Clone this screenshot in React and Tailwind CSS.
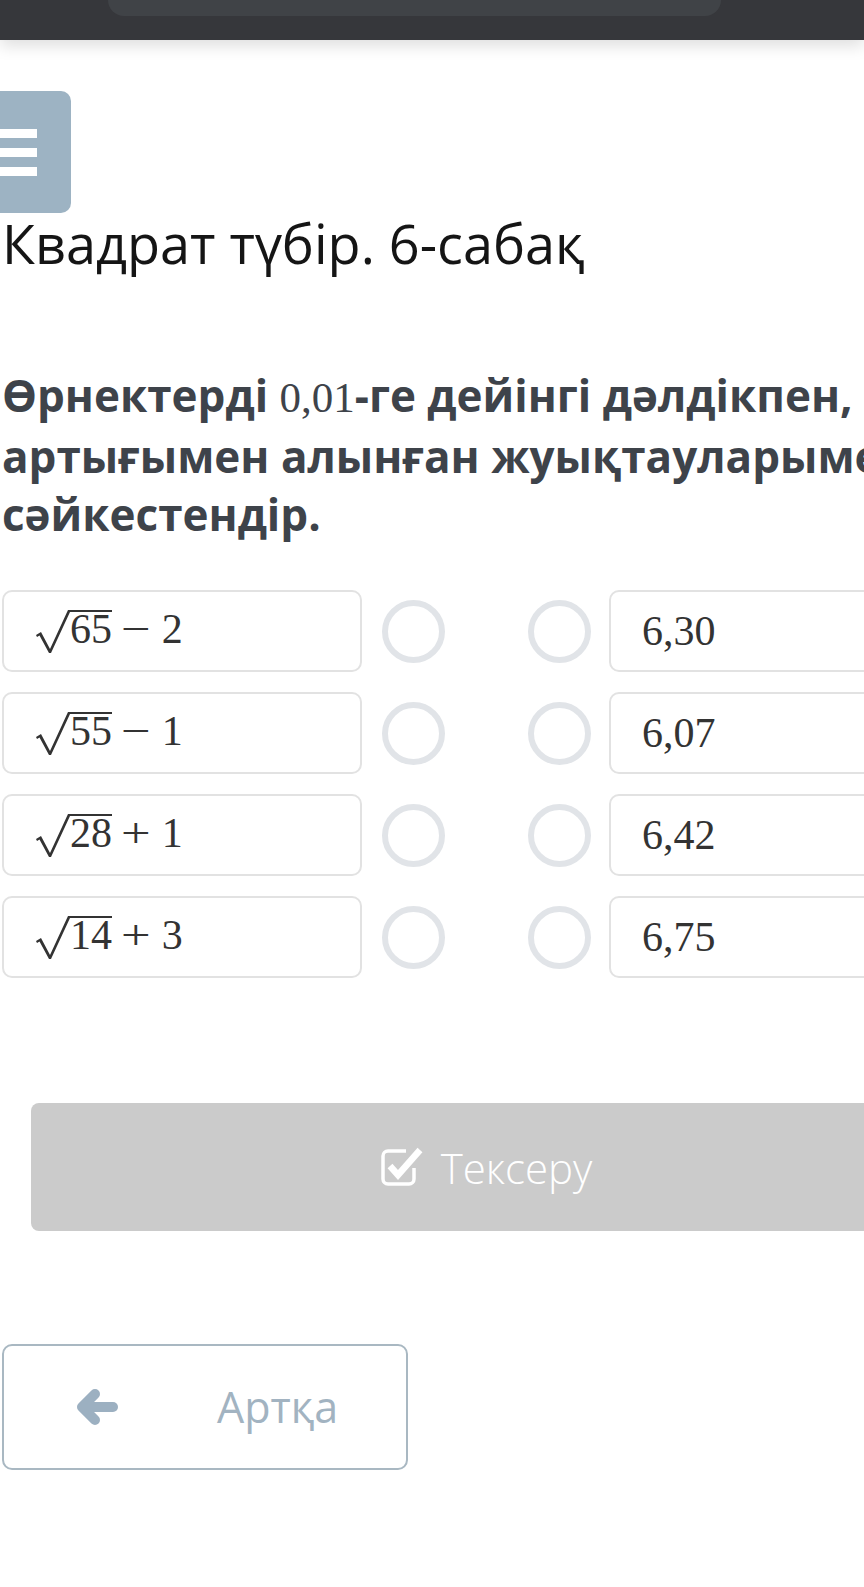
function Radical() {
  return (
    <svg className="h-[46px] w-[35px] shrink-0" viewBox="0 0 35 46" fill="#333">
      <path d="M1 27 L6 24 L15 41 L33 2 L35 2 L35 4 L16 45 L14 45 L4.5 27.5 L2 29 Z" />
    </svg>
  );
}

function SqrtExpr({ n, op, k }) {
  return (
    <div className="flex h-[46px] items-start font-['Liberation_Serif',serif] text-[42px] text-[#333]">
      <Radical />
      <span className="mt-[2px] border-t-2 border-[#333] leading-[35px]">{n}</span>
      <span className="mt-[4px] ml-[12px] scale-x-125 leading-[35px]">{op}</span>
      <span className="mt-[4px] ml-[14px] leading-[35px]">{k}</span>
    </div>
  );
}

const rows = [
  { n: '65', op: '\u2212', k: '2', v: '6,30' },
  { n: '55', op: '\u2212', k: '1', v: '6,07' },
  { n: '28', op: '+', k: '1', v: '6,42' },
  { n: '14', op: '+', k: '3', v: '6,75' },
];

function CheckIcon() {
  return (
    <svg className="h-[40px] w-[44px]" viewBox="0 0 44 40" fill="none" stroke="#fff">
      <path d="M26 4 H8 a5 5 0 0 0 -5 5 V32 a5 5 0 0 0 5 5 H29 a5 5 0 0 0 5 -5 V21" strokeWidth="3.5" />
      <path d="M10 19 L18 28 L40 3" strokeWidth="6.5" strokeLinejoin="miter" />
    </svg>
  );
}

function BackArrow() {
  return (
    <svg className="h-[36px] w-[42px] shrink-0" viewBox="0 0 42 36" fill="none" stroke="#9cb0c1" strokeLinecap="round" strokeLinejoin="round">
      <path d="M19 5 L6 18 L19 31" strokeWidth="10" />
      <path d="M8 18 H37" strokeWidth="10" />
    </svg>
  );
}

export default function App() {
  return (
    <div className="min-h-screen w-full overflow-hidden bg-white">
      <header className="relative z-10 h-[40px] bg-[#36373b] shadow-[0_6px_16px_rgba(0,0,0,0.13)]">
        <div className="ml-[108px] h-[16px] w-[613px] rounded-b-[16px] bg-[#404347]" />
      </header>

      <div className="ml-[2px] w-[968px]">
        <div className="mt-[51px] ml-[-60px] flex h-[122px] w-[129px] flex-col items-end justify-center gap-[10px] rounded-[10px] bg-[#9db3c3] pr-[34px]">
          <div className="h-[9px] w-[70px] bg-white" />
          <div className="h-[9px] w-[70px] bg-white" />
          <div className="h-[9px] w-[70px] bg-white" />
        </div>

        <h1 className="font-['Open_Sans',sans-serif] text-[54px] font-normal leading-[60px] text-[#151515]">
          Квадрат түбір. 6-сабақ
        </h1>

        <p className="mt-[93px] font-['Open_Sans',sans-serif] text-[44px] font-bold leading-[58px] text-[#3e434a]">
          Өрнектерді <span className="font-['Liberation_Serif',serif] text-[43px] font-normal">0,01</span>-ге дейінгі дәлдікпен, артығымен алынған жуықтауларымен сәйкестендір.
        </p>

        <div className="mt-[47px] flex flex-col gap-[20px]">
          {rows.map((r) => (
            <div key={r.v} className="flex items-center">
              <div className="flex h-[82px] w-[360px] items-center rounded-[10px] border-2 border-[#e2e2e2] pl-[31px]">
                <SqrtExpr n={r.n} op={r.op} k={r.k} />
              </div>
              <div className="ml-[20px] h-[63px] w-[63px] rounded-full border-[6px] border-[#e1e4e8]" />
              <div className="ml-[83px] h-[63px] w-[63px] rounded-full border-[6px] border-[#e1e4e8]" />
              <div className="ml-[18px] flex h-[82px] w-[360px] items-center rounded-[10px] border-2 border-[#e2e2e2] pl-[31px]">
                <span className="font-['Liberation_Serif',serif] text-[42px] leading-[42px] text-[#333]">{r.v}</span>
              </div>
            </div>
          ))}
        </div>

        <button
          type="button"
          className="mt-[125px] ml-[29px] flex h-[128px] w-[910px] items-center justify-center gap-[17px] rounded-[8px] bg-[#cbcbcb]"
        >
          <CheckIcon />
          <span className="font-['Open_Sans',sans-serif] text-[42px] font-light text-white">Тексеру</span>
        </button>

        <button
          type="button"
          className="mt-[113px] flex h-[126px] w-[406px] items-center rounded-[10px] border-2 border-[#a9b8c2] pl-[72px]"
        >
          <BackArrow />
          <span className="ml-[99px] font-['Open_Sans',sans-serif] text-[43px] text-[#a2b3c1]">Артқа</span>
        </button>
      </div>
    </div>
  );
}
